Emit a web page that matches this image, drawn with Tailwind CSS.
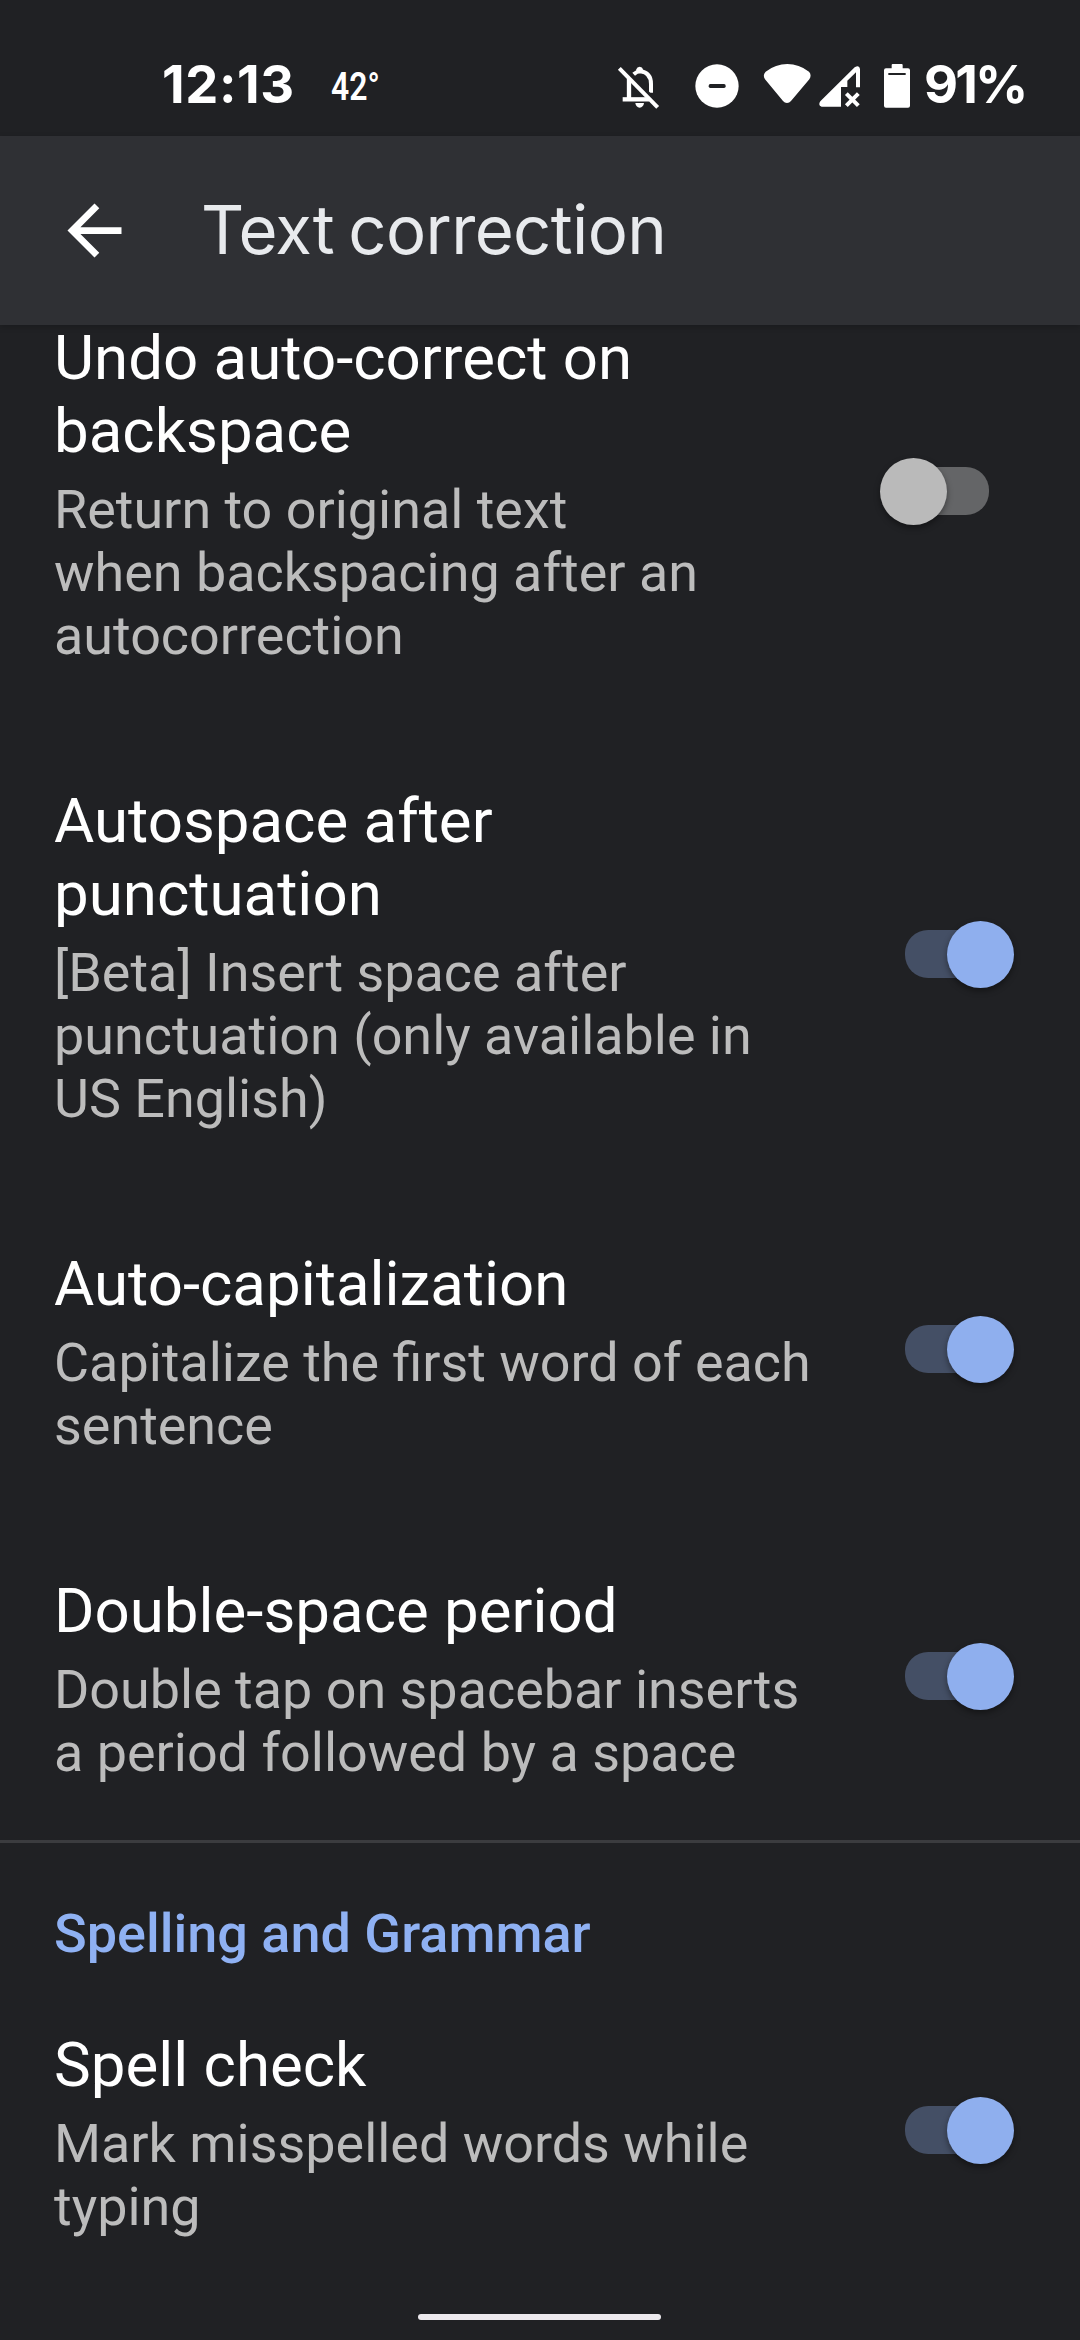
<!DOCTYPE html>
<html lang="en">
<head>
<meta charset="utf-8">
<title>Text correction</title>
<script src="https://cdn.jsdelivr.net/npm/@tailwindcss/browser@4"></script>
</head>
<body class="flex h-[2340px] w-[1080px] flex-col overflow-hidden bg-[#202124] font-['Roboto',sans-serif] text-white">

  <!-- Status bar -->
  <div class="flex h-[136px] shrink-0 items-start pt-[52px] font-['Inter',sans-serif] font-semibold">
    <div class="ml-[162px] w-[168px] text-[52.5px] leading-[64px] font-bold tracking-[0.6px]">12:13</div>
    <div class="mt-[13px] ml-[1px] w-[59px] origin-left scale-x-[.84] font-['Roboto',sans-serif] text-[38px] leading-[44px]">42°</div>
    <svg class="mt-[14px] ml-[227px] h-[44px] w-[43px]" viewBox="50 78 129 132" fill="none" stroke="#fff">
      <path d="M86 116V174" stroke-width="13"/>
      <path d="M67 178H146" stroke-width="13"/>
      <path d="M100 103Q110 94 120 94Q152 98 152 132V158" stroke-width="12"/>
      <path d="M108 96V88Q110 80 118 80T128 88V96Z" fill="#fff" stroke="none"/>
      <path d="M105 189H131Q129 202 118 203Q107 202 105 189Z" fill="#fff" stroke="none"/>
      <path d="M65 77L180 194" stroke="#202124" stroke-width="7"/>
      <path d="M57 85L172 202" stroke-width="12"/>
    </svg>
    <svg class="mt-[12px] ml-[35px] h-[44px] w-[44px]" viewBox="283 74 132 132">
      <circle cx="349" cy="140" r="65" fill="#fff"/>
      <rect x="324" y="134" width="51" height="12" rx="5" fill="#202124"/>
    </svg>
    <svg class="mt-[12px] ml-[24px] h-[40px] w-[48px]" viewBox="487 72 144 120" fill="#fff">
      <path d="M559 189Q552 189 547 183L493 118Q485 105 495 95Q525 72 560 72T625 95Q634 105 626 118L571 183Q566 189 559 189Z"/>
    </svg>
    <svg class="mt-[13px] ml-[8px] h-[44px] w-[42px]" viewBox="654 75 126 132" fill="#fff">
      <path d="M662 200Q650 197 658 184L761 82Q775 73 777 87V142H765V97L739 122V141H720V200Z"/>
      <path d="M736 161L772 197M772 161L736 197" stroke="#fff" stroke-width="12"/>
    </svg>
    <svg class="mt-[12px] ml-[23px] h-[44px] w-[26px]" viewBox="849 72 78 132" fill="#fff">
      <path d="M872 75Q872 72 875 72H902Q905 72 905 75V85H921Q927 85 927 91V197Q927 203 921 203H855Q849 203 849 197V91Q849 85 855 85H872Z"/>
      <rect x="862" y="99" width="52" height="6" fill="#202124"/>
    </svg>
    <div class="ml-[14px] text-[52.5px] leading-[64px] font-bold tracking-[-2.9px]">91%</div>
  </div>

  <!-- App bar -->
  <header class="z-10 flex h-[189px] shrink-0 items-center bg-[#2f3034] pl-[54px] shadow-[0_2px_6px_rgba(0,0,0,0.2)]">
    <svg class="size-[81px]" viewBox="0 0 24 24" fill="#fff"><path d="M20 11H7.83l5.59-5.59L12 4l-8 8 8 8 1.41-1.41L7.83 13H20v-2z"/></svg>
    <h1 class="mb-[2px] ml-[66px] font-['Inter',sans-serif] text-[67px] leading-[82px] tracking-[-0.6px] text-[#e8eaed] [word-spacing:-4px]">Text correction</h1>
  </header>

  <!-- Scrolled preference list -->
  <main class="-mt-[62px] flex flex-col">
    <section class="border-b-3 border-[#3b3c3f]">
      <div class="flex h-[463px] items-center justify-between pr-[66px] pl-[54px]">
        <div>
          <h2 class="text-[61.8px] leading-[73px]">Undo auto-correct on<br>backspace</h2>
          <p class="mt-[10px] text-[53.9px] leading-[63px] text-[#bcbcbc]">Return to original text<br>when backspacing after an<br>autocorrection</p>
        </div>
        <div class="relative mr-[25px] mb-[7px] h-[48px] w-[84px] rounded-[23px] bg-[#646567]">
          <span class="absolute -top-[9.2px] -left-[25px] size-[67.4px] rounded-full bg-[#bababa] shadow-[0_3px_6px_rgba(0,0,0,0.4)]"></span>
        </div>
      </div>
      <div class="flex h-[463px] items-center justify-between pr-[66px] pl-[54px]">
        <div>
          <h2 class="text-[61.8px] leading-[73px]">Autospace after<br>punctuation</h2>
          <p class="mt-[10px] text-[53.9px] leading-[63px] text-[#bcbcbc]">[Beta] Insert space after<br>punctuation (only available in<br>US English)</p>
        </div>
        <div class="relative mr-[25px] mb-[7px] h-[48px] w-[84px] rounded-[23px] bg-[#444f65]">
          <span class="absolute -top-[9.2px] -right-[25.2px] size-[67.4px] rounded-full bg-[#8fafee] shadow-[0_3px_6px_rgba(0,0,0,0.4)]"></span>
        </div>
      </div>
      <div class="flex h-[327px] items-center justify-between pr-[66px] pl-[54px]">
        <div>
          <h2 class="text-[61.8px] leading-[73px]">Auto-capitalization</h2>
          <p class="mt-[10px] text-[53.9px] leading-[63px] text-[#bcbcbc]">Capitalize the first word of each<br>sentence</p>
        </div>
        <div class="relative mr-[25px] mb-[7px] h-[48px] w-[84px] rounded-[23px] bg-[#444f65]">
          <span class="absolute -top-[9.2px] -right-[25.2px] size-[67.4px] rounded-full bg-[#8fafee] shadow-[0_3px_6px_rgba(0,0,0,0.4)]"></span>
        </div>
      </div>
      <div class="-mb-[3px] flex h-[327px] items-center justify-between pr-[66px] pl-[54px]">
        <div>
          <h2 class="text-[61.8px] leading-[73px]">Double-space period</h2>
          <p class="mt-[10px] text-[53.9px] leading-[63px] text-[#bcbcbc]">Double tap on spacebar inserts<br>a period followed by a space</p>
        </div>
        <div class="relative mr-[25px] mb-[7px] h-[48px] w-[84px] rounded-[23px] bg-[#444f65]">
          <span class="absolute -top-[9.2px] -right-[25.2px] size-[67.4px] rounded-full bg-[#8fafee] shadow-[0_3px_6px_rgba(0,0,0,0.4)]"></span>
        </div>
      </div>
    </section>

    <section>
      <h3 class="px-[54px] pt-[59px] pb-[5px] text-[54px] leading-[63px] font-medium text-[#8fb1f3]">Spelling and Grammar</h3>
      <div class="flex h-[327px] items-center justify-between pr-[66px] pl-[54px]">
        <div>
          <h2 class="text-[61.8px] leading-[73px]">Spell check</h2>
          <p class="mt-[10px] text-[53.9px] leading-[63px] text-[#bcbcbc]">Mark misspelled words while<br>typing</p>
        </div>
        <div class="relative mr-[25px] mb-[7px] h-[48px] w-[84px] rounded-[23px] bg-[#444f65]">
          <span class="absolute -top-[9.2px] -right-[25.2px] size-[67.4px] rounded-full bg-[#8fafee] shadow-[0_3px_6px_rgba(0,0,0,0.4)]"></span>
        </div>
      </div>
    </section>
  </main>

  <!-- Gesture navigation handle -->
  <div class="mt-[17px] ml-[418px] h-[6px] w-[243px] shrink-0 rounded-full bg-[#ece9ed]"></div>
</body>
</html>
